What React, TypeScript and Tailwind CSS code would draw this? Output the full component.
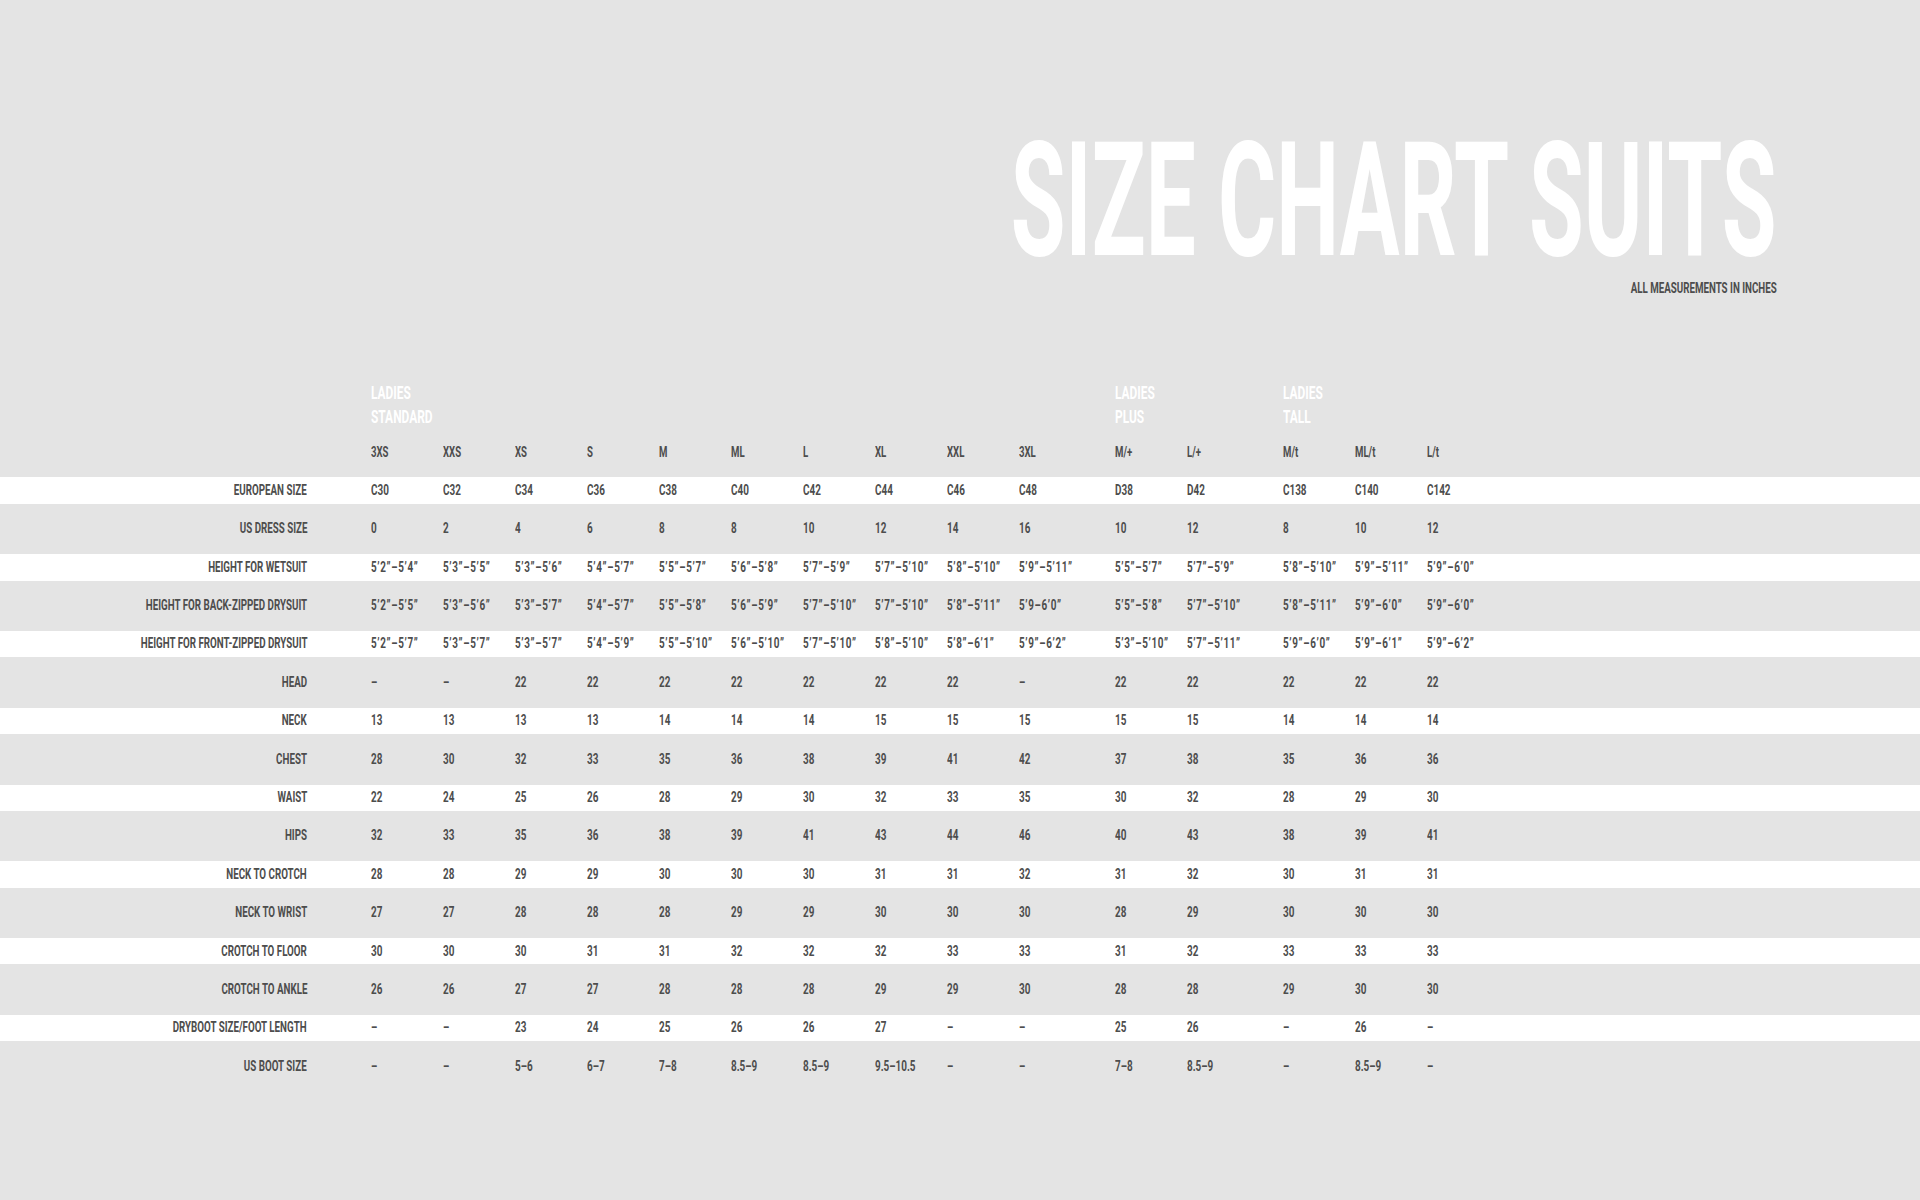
import clsx from 'clsx';

// Size chart for ladies suits. Font is a condensed grotesk in the original;
// we squeeze Roboto Bold horizontally to get close.

const SIZES = ['3XS', 'XXS', 'XS', 'S', 'M', 'ML', 'L', 'XL', 'XXL', '3XL', 'M/+', 'L/+', 'M/t', 'ML/t', 'L/t'];

const GROUPS: { title: string[]; cols: number }[] = [
  { title: ['LADIES', 'STANDARD'], cols: 10 },
  { title: ['LADIES', 'PLUS'], cols: 2 },
  { title: ['LADIES', 'TALL'], cols: 3 },
];

const D = '–';

const ROWS: { label: string; values: string[] }[] = [
  { label: 'EUROPEAN SIZE', values: ['C30', 'C32', 'C34', 'C36', 'C38', 'C40', 'C42', 'C44', 'C46', 'C48', 'D38', 'D42', 'C138', 'C140', 'C142'] },
  { label: 'US DRESS SIZE', values: ['0', '2', '4', '6', '8', '8', '10', '12', '14', '16', '10', '12', '8', '10', '12'] },
  {
    label: 'HEIGHT FOR WETSUIT',
    values: ['5’2”–5’4”', '5’3”–5’5”', '5’3”–5’6”', '5’4”–5’7”', '5’5”–5’7”', '5’6”–5’8”', '5’7”–5’9”', '5’7”–5’10”', '5’8”–5’10”', '5’9”–5’11”', '5’5”–5’7”', '5’7”–5’9”', '5’8”–5’10”', '5’9”–5’11”', '5’9”–6’0”'],
  },
  {
    label: 'HEIGHT FOR BACK-ZIPPED DRYSUIT',
    values: ['5’2”–5’5”', '5’3”–5’6”', '5’3”–5’7”', '5’4”–5’7”', '5’5”–5’8”', '5’6”–5’9”', '5’7”–5’10”', '5’7”–5’10”', '5’8”–5’11”', '5’9–6’0”', '5’5”–5’8”', '5’7”–5’10”', '5’8”–5’11”', '5’9”–6’0”', '5’9”–6’0”'],
  },
  {
    label: 'HEIGHT FOR FRONT-ZIPPED DRYSUIT',
    values: ['5’2”–5’7”', '5’3”–5’7”', '5’3”–5’7”', '5’4”–5’9”', '5’5”–5’10”', '5’6”–5’10”', '5’7”–5’10”', '5’8”–5’10”', '5’8”–6’1”', '5’9”–6’2”', '5’3”–5’10”', '5’7”–5’11”', '5’9”–6’0”', '5’9”–6’1”', '5’9”–6’2”'],
  },
  { label: 'HEAD', values: [D, D, '22', '22', '22', '22', '22', '22', '22', D, '22', '22', '22', '22', '22'] },
  { label: 'NECK', values: ['13', '13', '13', '13', '14', '14', '14', '15', '15', '15', '15', '15', '14', '14', '14'] },
  { label: 'CHEST', values: ['28', '30', '32', '33', '35', '36', '38', '39', '41', '42', '37', '38', '35', '36', '36'] },
  { label: 'WAIST', values: ['22', '24', '25', '26', '28', '29', '30', '32', '33', '35', '30', '32', '28', '29', '30'] },
  { label: 'HIPS', values: ['32', '33', '35', '36', '38', '39', '41', '43', '44', '46', '40', '43', '38', '39', '41'] },
  { label: 'NECK TO CROTCH', values: ['28', '28', '29', '29', '30', '30', '30', '31', '31', '32', '31', '32', '30', '31', '31'] },
  { label: 'NECK TO WRIST', values: ['27', '27', '28', '28', '28', '29', '29', '30', '30', '30', '28', '29', '30', '30', '30'] },
  { label: 'CROTCH TO FLOOR', values: ['30', '30', '30', '31', '31', '32', '32', '32', '33', '33', '31', '32', '33', '33', '33'] },
  { label: 'CROTCH TO ANKLE', values: ['26', '26', '27', '27', '28', '28', '28', '29', '29', '30', '28', '28', '29', '30', '30'] },
  { label: 'DRYBOOT SIZE/FOOT LENGTH', values: [D, D, '23', '24', '25', '26', '26', '27', D, D, '25', '26', D, '26', D] },
  { label: 'US BOOT SIZE', values: [D, D, '5–6', '6–7', '7–8', '8.5–9', '8.5–9', '9.5–10.5', D, D, '7–8', '8.5–9', D, '8.5–9', D] },
];

// first column of a new group gets the extra gutter
const groupStart = (i: number) => i === 10 || i === 12;

function Cell({ text, idx }: { text: string; idx: number }) {
  // heights (feet/inches) are set a little looser in the original
  const loose = text.includes('’');
  return (
    <div className={clsx('w-[72px] shrink-0', groupStart(idx) && 'ml-[24px]')}>
      <span className={clsx('inline-block origin-left scale-x-[0.64] whitespace-nowrap', loose && 'tracking-[1px]')}>
        {text}
      </span>
    </div>
  );
}

function Label({ text }: { text: string }) {
  return (
    <div className="w-[307px] shrink-0 text-right">
      <span className="inline-block origin-right scale-x-[0.63] whitespace-nowrap">{text}</span>
    </div>
  );
}

export default function App() {
  return (
    <div className="min-h-screen bg-[#e4e4e4] font-[Roboto,sans-serif] font-bold text-[#4d4d4d]">
      {/* titel */}
      <div className="flex flex-col items-end pr-[143px] pt-[121px]">
        <h1 className="origin-right scale-x-[0.56] whitespace-nowrap text-[159px] leading-none text-white">
          SIZE CHART SUITS
        </h1>
        <p className="mt-[1px] origin-right scale-x-[0.65] whitespace-nowrap text-[15px] leading-none">
          ALL MEASUREMENTS IN INCHES
        </p>
      </div>

      {/* tabel */}
      <div className="mt-[85px] pb-[60px]">
        <div className="flex">
          <div className="w-[371px] shrink-0" />
          {GROUPS.map((g, gi) => (
            <div
              key={gi}
              className={clsx('shrink-0 text-[18.5px] leading-[24px] text-white', gi > 0 && 'ml-[24px]')}
              style={{ width: g.cols * 72 }}
            >
              {g.title.map((t) => (
                <div key={t}>
                  <span className="inline-block origin-left scale-x-[0.645] whitespace-nowrap">{t}</span>
                </div>
              ))}
            </div>
          ))}
        </div>

        <div className="mt-[10px] flex flex-col gap-y-[12px] text-[15.5px] leading-none">
          <div className="flex h-[26.4px] items-center text-[15px]">
            <div className="w-[371px] shrink-0" />
            {SIZES.map((s, i) => (
              <Cell key={s} text={s} idx={i} />
            ))}
          </div>
          {ROWS.map((r, ri) => (
            <div key={r.label} className={clsx('flex h-[26.4px] items-center', ri % 2 === 0 && 'bg-white')}>
              <Label text={r.label} />
              <div className="w-[64px] shrink-0" />
              {r.values.map((v, i) => (
                <Cell key={i} text={v} idx={i} />
              ))}
            </div>
          ))}
        </div>
      </div>
    </div>
  );
}
